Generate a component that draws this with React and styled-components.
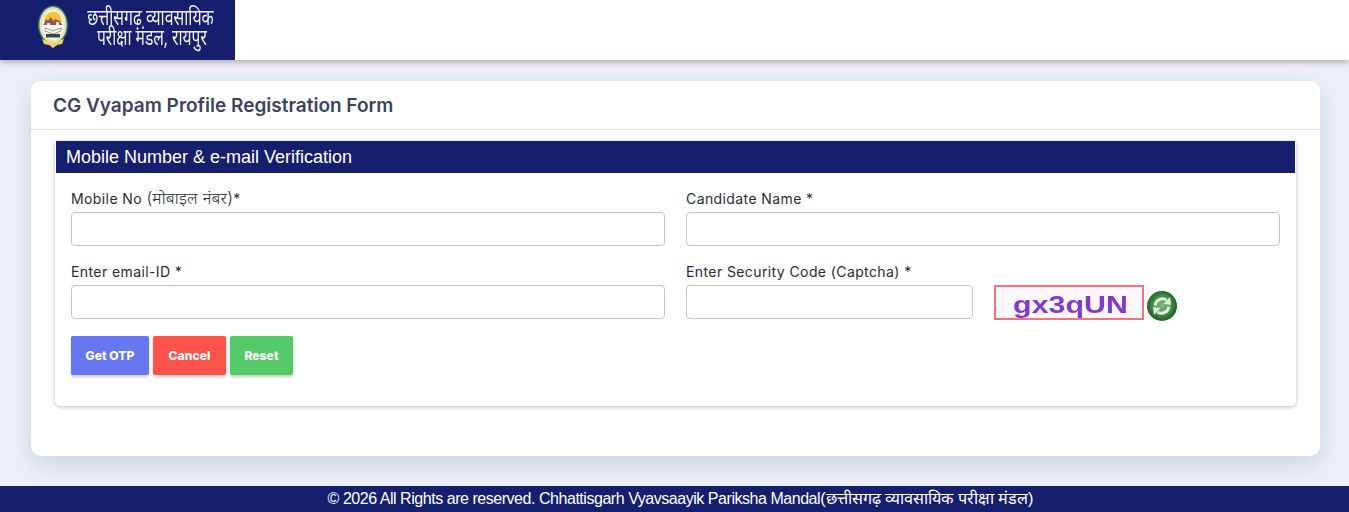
import React from 'react';
import styled, { createGlobalStyle } from 'styled-components';

const GlobalStyle = createGlobalStyle`
  html, body {
    margin: 0;
    padding: 0;
    background: #ecf0f6;
  }
  * {
    box-sizing: border-box;
  }
`;

const navy = '#151f6d';
const bodyFont = `Inter, "Noto Sans", sans-serif`;

const Page = styled.div`
  display: flex;
  flex-direction: column;
  min-height: 512px;
  background: #ecf0f6;
  font-family: ${bodyFont};
`;

const Header = styled.header`
  height: 60px;
  background: #fff;
  box-shadow: 0 2px 6px rgba(0, 0, 0, 0.3);
`;

const Brand = styled.div`
  width: 235px;
  height: 60px;
  background: ${navy};
  display: flex;
  align-items: flex-start;
  padding: 5px 0 0 38px;
  gap: 19px;
`;

const BrandText = styled.div`
  color: #f2f2f2;
  font-family: "Noto Sans", sans-serif;
  font-size: 22px;
  line-height: 20px;
  text-align: center;
  white-space: nowrap;
  width: 127px;
  margin-top: 1px;
`;

const BrandLine = styled.div`
  transform: scaleX(${(p) => p.$squeeze});
  transform-origin: center;
  display: flex;
  justify-content: center;
  margin: 0 -30px;
  padding-left: ${(p) => p.$shift || 0};
`;

const Main = styled.main`
  flex: 1;
  padding: 21px 29px 30px 31px;
`;

const Card = styled.section`
  height: 375px;
  background: #fff;
  border-radius: 10px;
  box-shadow: 0 8px 22px rgba(60, 70, 110, 0.17);
`;

const CardHead = styled.div`
  height: 49px;
  padding: 0 22px;
  display: flex;
  align-items: center;
  border-bottom: 1px dotted #c9c9c9;
`;

const CardTitle = styled.h1`
  margin: 0;
  color: #3b4563;
  font-family: ${bodyFont};
  font-size: 19px;
  font-weight: 600;
`;

const CardBody = styled.div`
  padding: 11px 24px 0 24px;
`;

const Panel = styled.div`
  height: 265px;
  border-radius: 0 0 5px 5px;
  box-shadow: 0 1px 4px rgba(0, 0, 0, 0.28);
`;

const PanelBar = styled.div`
  height: 32px;
  margin: 0 1px;
  background: ${navy};
  color: #fff;
  padding-left: 10px;
  display: flex;
  align-items: center;
  font-family: "Liberation Sans", Arial, sans-serif;
  font-size: 18px;
`;

const PanelBody = styled.div`
  padding: 15px 16px 0;
`;

const FormGrid = styled.div`
  display: grid;
  grid-template-columns: 594px 594px;
  column-gap: 21px;
  row-gap: 15px;
`;

const Field = styled.div`
  display: flex;
  flex-direction: column;
  gap: 4px;
`;

const Label = styled.label`
  height: 20px;
  line-height: 22px;
  font-size: 14px;
  letter-spacing: 0.4px;
  color: #2b2b33;
  white-space: nowrap;
`;

const HindiLabel = styled.span`
  font-size: 16.5px;
  line-height: 1;
  letter-spacing: 0.2px;
  font-weight: 300;
  vertical-align: top;
  position: relative;
  top: 2px;
`;

const Input = styled.input`
  display: block;
  flex: none;
  width: ${(p) => p.$width || '100%'};
  height: 34px;
  background: #fff;
  border: 1px solid #c6c6c6;
  border-radius: 4px;
  outline: none;
`;

const CaptchaRow = styled.div`
  display: flex;
  align-items: flex-start;
  height: 34px;
`;

const CaptchaBox = styled.div`
  flex: none;
  width: 150px;
  height: 35px;
  margin-left: 21px;
  padding-top: 5px;
  border: 2px solid #f5737b;
  background: #fdf8fd;
  display: flex;
  align-items: center;
  justify-content: center;
  color: #8338cf;
  font-family: "Liberation Sans", Arial, sans-serif;
  font-weight: 700;
  font-size: 23px;
`;

const CaptchaText = styled.span`
  display: block;
  transform: translateX(1px) scaleX(1.32);
  filter: blur(0.3px);
`;

const RefreshButton = styled.button`
  flex: none;
  width: 30px;
  height: 30px;
  margin: 6px 0 0 3px;
  padding: 0;
  border: none;
  background: none;
  display: block;
`;

const Actions = styled.div`
  display: flex;
  gap: 4px;
  margin-top: 17px;
`;

const Button = styled.button`
  width: ${(p) => p.$width};
  height: 39px;
  border: none;
  border-radius: 2px;
  background: ${(p) => p.$bg};
  color: #fff;
  font-family: ${bodyFont};
  font-size: 12px;
  font-weight: 800;
  letter-spacing: 0.1px;
  box-shadow: 0 2px 3px rgba(0, 0, 0, 0.2);
`;

const Footer = styled.footer`
  height: 26px;
  padding-left: 12px;
  background: ${navy};
  color: #fff;
  font-family: "Liberation Sans", Arial, sans-serif;
  font-size: 16px;
  letter-spacing: -0.46px;
  line-height: 24px;
  text-align: center;
`;

const FooterHindi = styled.span`
  font-size: 16.2px;
  letter-spacing: 0;
`;

const Emblem = () => (
  <svg width="30" height="43" viewBox="0 0 30 43" style={{ flex: 'none' }}>
    <ellipse cx="15" cy="20" rx="15" ry="19.5" fill="#3d7a5c" />
    <ellipse cx="15" cy="20" rx="13.6" ry="18" fill="#e6dfc4" />
    <ellipse cx="15" cy="20" rx="11" ry="15" fill="#fbf9ee" />
    <path d="M6 17a9 10.5 0 0 1 18 0z" fill="#f4c72e" />
    <path d="M5.5 20l2.5-6 2 2 2.5-4 3 4 2-2 2 1 2 1 3 4z" fill="#8e5468" />
    <path d="M9 18h3v2H9zM18 17h3v3h-3z" fill="#e8e4d0" />
    <path d="M7 23l8 3 8-3v3l-8 3-8-3z" fill="#fff" stroke="#6a7a68" strokeWidth="0.8" />
    <rect x="8" y="29" width="14" height="3.5" fill="#39453a" />
    <path d="M4 34l11 4 11-4-2 5-5 1-4 3-4-3-5-1z" fill="#e7d768" />
  </svg>
);

const RefreshIcon = () => (
  <svg width="30" height="30" viewBox="0 0 30 30">
    <defs>
      <radialGradient id="ball" cx="50%" cy="48%" r="52%">
        <stop offset="0%" stopColor="#86bb85" />
        <stop offset="65%" stopColor="#3c8a40" />
        <stop offset="100%" stopColor="#1d5a25" />
      </radialGradient>
    </defs>
    <circle cx="15" cy="15" r="15" fill="url(#ball)" />
    <path d="M8 14.5A7.5 7.5 0 0 1 19.5 9" fill="none" stroke="#e3f0df" strokeWidth="3" />
    <path d="M16.5 13l7.5 1-1-8z" fill="#e3f0df" />
    <path d="M22 15.5A7.5 7.5 0 0 1 10.5 21" fill="none" stroke="#e3f0df" strokeWidth="3" />
    <path d="M13.5 17L6 16l1 8z" fill="#e3f0df" />
  </svg>
);

export default function App() {
  return (
    <Page>
      <GlobalStyle />
      <Header>
        <Brand>
          <Emblem />
          <BrandText>
            <BrandLine $squeeze={0.72}>छत्तीसगढ़ व्यावसायिक</BrandLine>
            <BrandLine $squeeze={0.71} $shift="4px">परीक्षा मंडल, रायपुर</BrandLine>
          </BrandText>
        </Brand>
      </Header>
      <Main>
        <Card>
          <CardHead>
            <CardTitle>CG Vyapam Profile Registration Form</CardTitle>
          </CardHead>
          <CardBody>
            <Panel>
              <PanelBar>Mobile Number &amp; e-mail Verification</PanelBar>
              <PanelBody>
                <FormGrid>
                  <Field>
                    <Label>
                      Mobile No <HindiLabel>(मोबाइल नंबर)</HindiLabel>*
                    </Label>
                    <Input />
                  </Field>
                  <Field>
                    <Label>Candidate Name *</Label>
                    <Input />
                  </Field>
                  <Field>
                    <Label>Enter email-ID *</Label>
                    <Input />
                  </Field>
                  <Field>
                    <Label>Enter Security Code (Captcha) *</Label>
                    <CaptchaRow>
                      <Input $width="287px" />
                      <CaptchaBox>
                        <CaptchaText>gx3qUN</CaptchaText>
                      </CaptchaBox>
                      <RefreshButton>
                        <RefreshIcon />
                      </RefreshButton>
                    </CaptchaRow>
                  </Field>
                </FormGrid>
                <Actions>
                  <Button $width="78px" $bg="#6777ef">Get OTP</Button>
                  <Button $width="73px" $bg="#fc544b">Cancel</Button>
                  <Button $width="63px" $bg="#54ca68">Reset</Button>
                </Actions>
              </PanelBody>
            </Panel>
          </CardBody>
        </Card>
      </Main>
      <Footer>
        © 2026 All Rights are reserved. Chhattisgarh Vyavsaayik Pariksha Mandal
        <FooterHindi>(छत्तीसगढ़ व्यावसायिक परीक्षा मंडल)</FooterHindi>
      </Footer>
    </Page>
  );
}
